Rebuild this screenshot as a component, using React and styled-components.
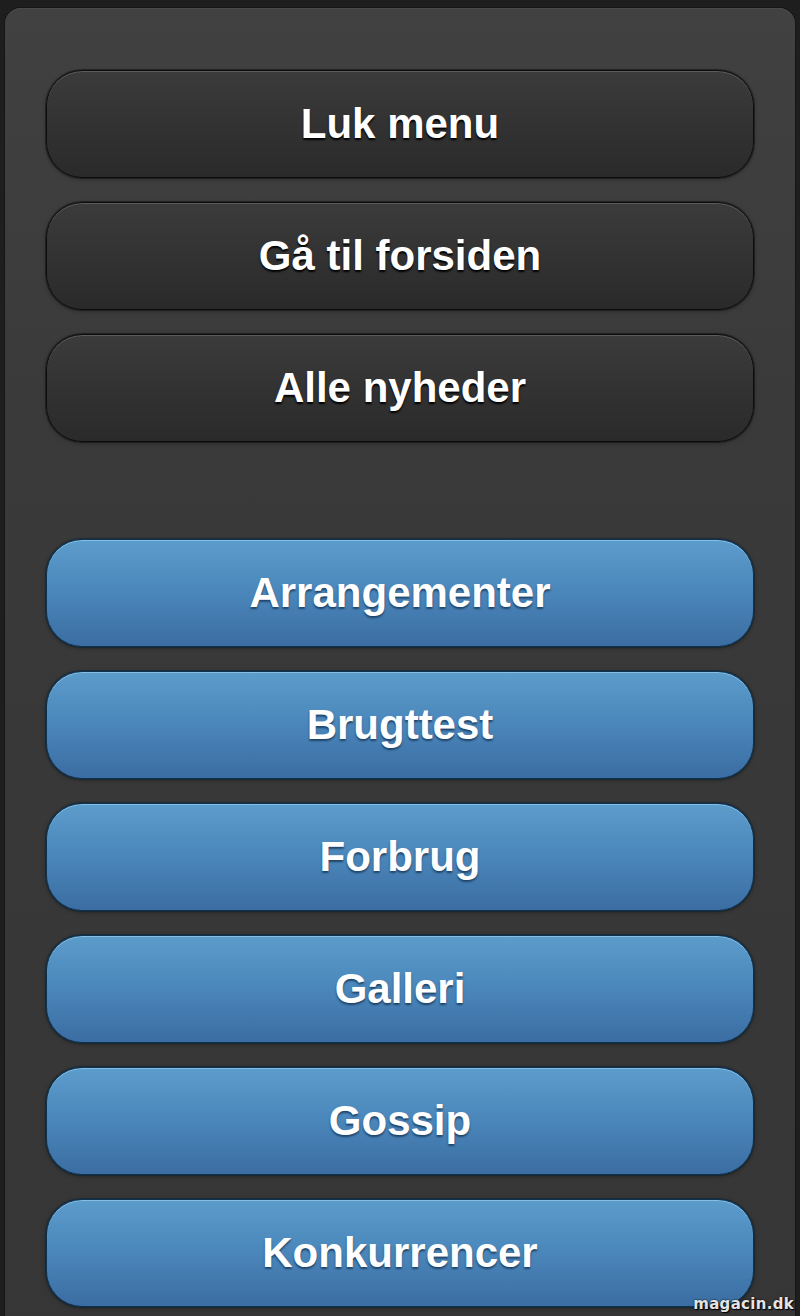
import React from 'react'
import styled, { createGlobalStyle, css } from 'styled-components'

const GlobalStyle = createGlobalStyle`
    html, body {
        margin: 0;
        padding: 0;
        background: #1e1e1e;
    }
    body {
        font-family: "Liberation Sans", Arial, sans-serif;
    }
`

const Page = styled.div`
    position: relative;
    width: 800px;
    height: 1316px;
    overflow: hidden;
    padding: 8px 5px 0;
    box-sizing: border-box;
`

const Panel = styled.nav`
    min-height: 1320px;
    box-sizing: border-box;
    padding: 62px 41px 0;
    border-radius: 16px 16px 0 0;
    background: linear-gradient(#414141, #3a3a3a 30%, #363636);
    box-shadow: 0 0 0 1px #161616, inset 0 1px 0 #4a4a4a;
    display: flex;
    flex-direction: column;
`

const Group = styled.div`
    display: flex;
    flex-direction: column;
    gap: 24px;
    margin-bottom: ${({ spacing }) => spacing || 0}px;
`

const dark = css`
    border: 1px solid #0c0c0c;
    background: linear-gradient(#3b3b3b, #2a2a2a);
    box-shadow: inset 0 1px 0 #5c5c5c, 0 0 0 1px rgba(0, 0, 0, 0.35), 0 1px 4px rgba(0, 0, 0, 0.35);
    text-shadow: 0 2px 2px #000;
`

const blue = css`
    border: 1px solid #0c3352;
    background: linear-gradient(#5c9ccb, #4a86ba 50%, #3b6da2);
    box-shadow: inset 0 1px 0 #86bde2, 0 0 0 1px rgba(8, 36, 58, 0.5), 0 1px 4px rgba(0, 0, 0, 0.4);
    text-shadow: 0 2px 2px #1f4468;
`

const MenuButton = styled.a`
    display: flex;
    align-items: center;
    justify-content: center;
    height: 108px;
    box-sizing: border-box;
    border-radius: 36px;
    color: #fff;
    font-family: "Liberation Sans", Arial, sans-serif;
    font-size: 42px;
    font-weight: bold;
    text-decoration: none;
    cursor: pointer;
    ${({ variant }) => (variant === 'blue' ? blue : dark)}
`

const Watermark = styled.span`
    position: absolute;
    right: 6px;
    bottom: 3px;
    font-family: "DejaVu Sans", Verdana, sans-serif;
    font-weight: bold;
    font-size: 15px;
    color: #e4e4e4;
    letter-spacing: 0.3px;
    text-shadow: 0 0 2px #000, 1px 1px 1px #000;
`

const mainLinks = ['Luk menu', 'Gå til forsiden', 'Alle nyheder']
const categories = ['Arrangementer', 'Brugttest', 'Forbrug', 'Galleri', 'Gossip', 'Konkurrencer']

export default function App() {
    return (
        <Page>
            <GlobalStyle />
            <Panel>
                <Group spacing={97}>
                    {mainLinks.map((item) => (
                        <MenuButton key={item}>{item}</MenuButton>
                    ))}
                </Group>
                <Group>
                    {categories.map((item) => (
                        <MenuButton key={item} variant="blue">{item}</MenuButton>
                    ))}
                </Group>
            </Panel>
            <Watermark>magacin.dk</Watermark>
        </Page>
    )
}
